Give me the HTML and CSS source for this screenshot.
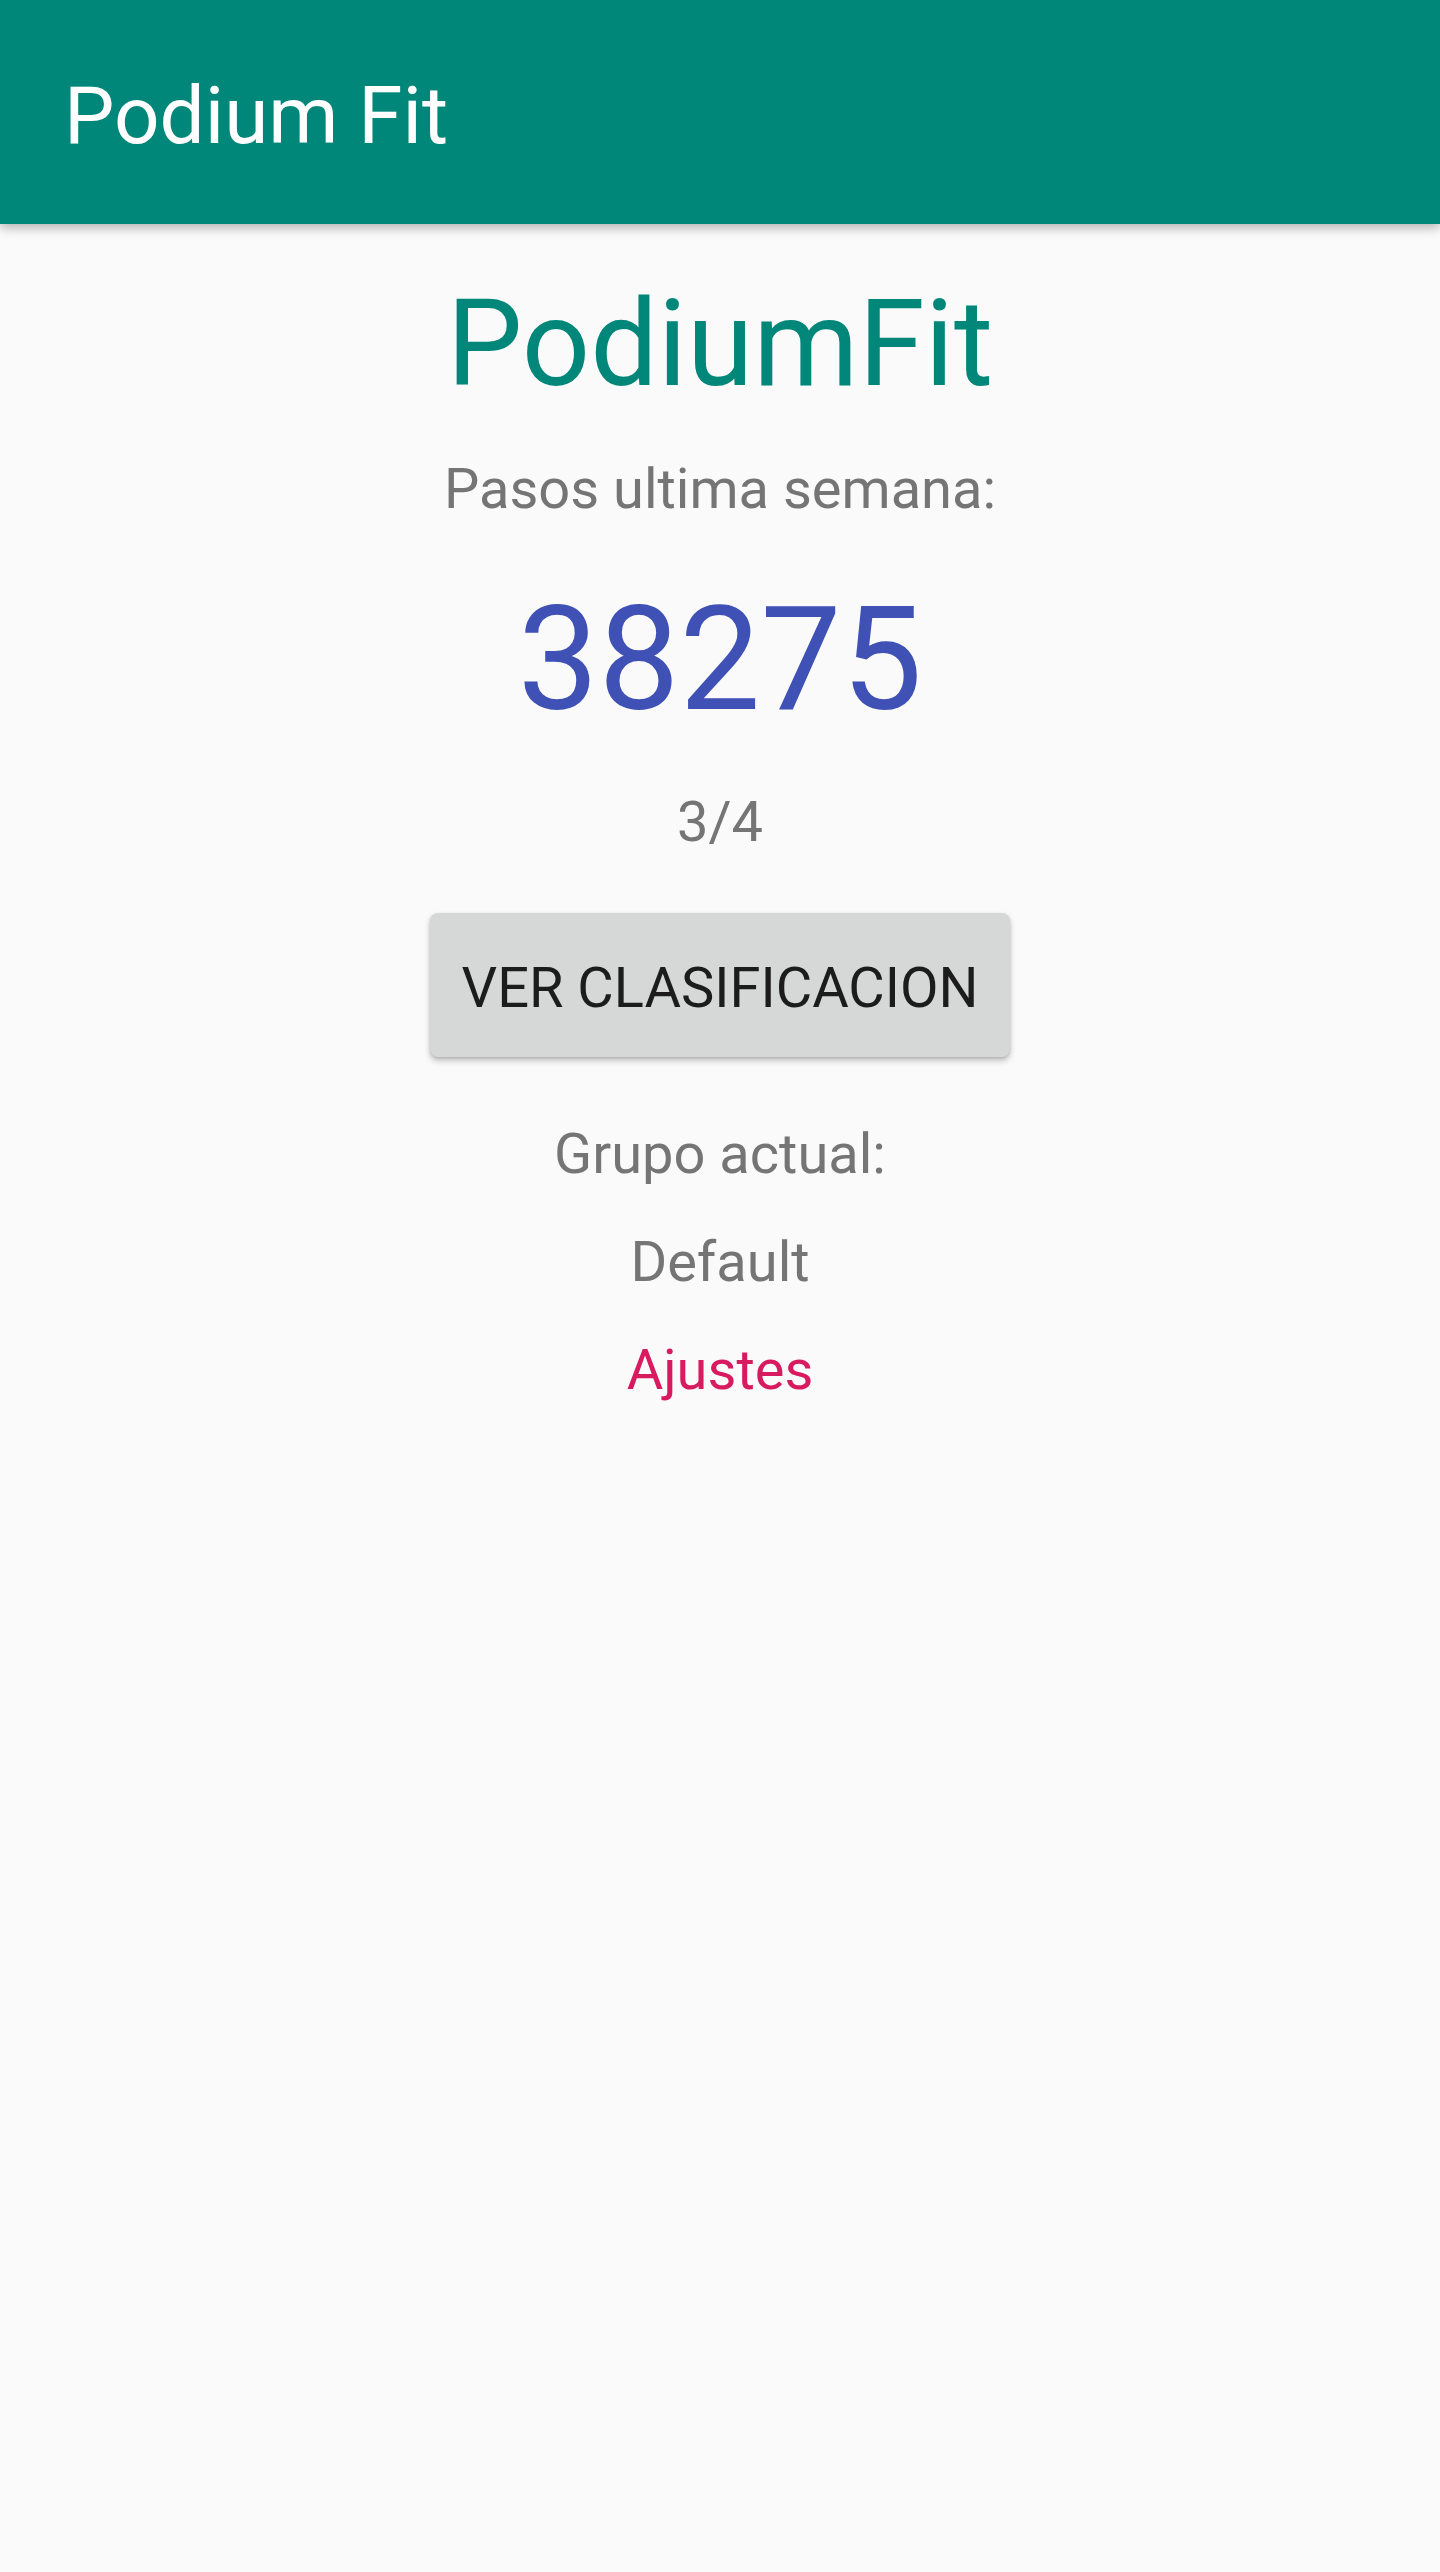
FILE: index.html
```html
<!DOCTYPE html>
<html lang="es">
<head>
<meta charset="utf-8">
<title>Podium Fit</title>
<link rel="stylesheet" href="styles.css">
</head>
<body>
<header class="toolbar">
  <h1 class="toolbar-title">Podium Fit</h1>
</header>
<main class="content">
  <div class="app-name">PodiumFit</div>
  <div class="label label-steps">Pasos ultima semana:</div>
  <div class="steps">38275</div>
  <div class="label label-rank">3/4</div>
  <button class="btn-ranking" type="button">VER CLASIFICACION</button>
  <div class="label label-group">Grupo actual:</div>
  <div class="label label-group-name">Default</div>
  <a class="settings-link" href="#">Ajustes</a>
</main>
</body>
</html>
```

FILE: styles.css
```css
html, body {
  margin: 0;
  padding: 0;
}
body {
  width: 1440px;
  min-height: 2572px;
  background: #fafafa;
  font-family: Roboto, "Noto Sans", sans-serif;
}
.toolbar {
  height: 224px;
  background: #00877a;
  box-shadow: 0 4px 10px rgba(0, 0, 0, 0.28);
  position: relative;
  z-index: 1;
  display: flex;
  align-items: flex-start;
}
.toolbar-title {
  margin: 76px 0 0 64px;
  font-size: 80px;
  line-height: 80px;
  font-weight: 400;
  color: #ffffff;
}
.content {
  display: flex;
  flex-direction: column;
  align-items: center;
}
.app-name {
  margin-top: 60px;
  font-size: 120px;
  line-height: 120px;
  color: #00877a;
}
.label {
  font-size: 56px;
  line-height: 56px;
  color: #757575;
}
.label-steps {
  margin-top: 57px;
}
.steps {
  margin-top: 71px;
  font-size: 144px;
  line-height: 144px;
  color: #3f51b5;
}
.label-rank {
  margin-top: 62px;
}
.btn-ranking {
  margin-top: 63px;
  width: 580px;
  height: 144px;
  border: none;
  border-radius: 8px;
  background: #d6d7d7;
  box-shadow: 0 4px 6px rgba(0, 0, 0, 0.22), 0 1px 3px rgba(0, 0, 0, 0.12);
  font-family: Roboto, "Noto Sans", sans-serif;
  font-size: 56px;
  line-height: 56px;
  color: #1c1c1c;
  padding: 6px 0 0;
}
.label-group {
  margin-top: 69px;
}
.label-group-name {
  margin-top: 52px;
}
.settings-link {
  margin-top: 52px;
  font-size: 56px;
  line-height: 56px;
  color: #d81b60;
  text-decoration: none;
}
```
